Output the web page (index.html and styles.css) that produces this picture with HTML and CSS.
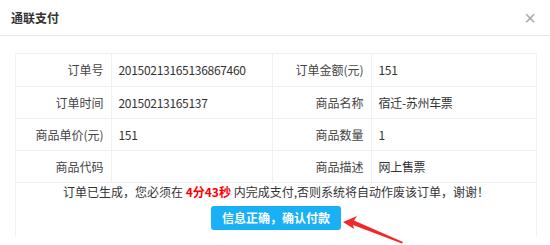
FILE: index.html
```html
<!DOCTYPE html>
<html lang="zh">
<head>
<meta charset="utf-8">
<link rel="stylesheet" href="styles.css">
</head>
<body>
<div class="modal">
  <div class="modal-header">
    <span class="title">通联支付</span>
    <span class="close">×</span>
  </div>
  <div class="modal-body">
    <div class="box">
      <table class="info">
        <tr><td class="lbl c1">订单号</td><td class="val c2">20150213165136867460</td><td class="lbl c3">订单金额(元)</td><td class="val c4">151</td></tr>
        <tr><td class="lbl">订单时间</td><td class="val">20150213165137</td><td class="lbl">商品名称</td><td class="val">宿迁-苏州车票</td></tr>
        <tr><td class="lbl">商品单价(元)</td><td class="val">151</td><td class="lbl">商品数量</td><td class="val">1</td></tr>
        <tr><td class="lbl">商品代码</td><td class="val"></td><td class="lbl">商品描述</td><td class="val">网上售票</td></tr>
      </table>
      <p class="msg">订单已生成，您必须在 <b class="time">4分43秒</b> 内完成支付,否则系统将自动作废该订单，谢谢！</p>
      <div class="actions">
        <button class="btn">信息正确，确认付款</button>
        <svg class="arrow" width="70" height="32" viewBox="0 0 70 32">
          <polygon points="0,9 14,3 11,7.5 60,29 59,30.5 10,12 11,16" fill="#f0282a"/>
        </svg>
      </div>
    </div>
  </div>
</div>
</body>
</html>
```
FILE: styles.css
```css
* { box-sizing: border-box; }
html, body { margin: 0; padding: 0; background: #fff; }
body {
  font-family: "Noto Sans CJK SC", "Noto Sans", "Liberation Sans", sans-serif;
  font-size: 12px;
  color: #333;
  width: 550px;
  height: 245px;
  overflow: hidden;
}
.modal-header {
  height: 36px;
  border-bottom: 1px solid #e8e8e8;
  display: flex;
  align-items: center;
  justify-content: space-between;
  padding: 0 14px 0 11px;
}
.title { font-size: 12px; font-weight: bold; color: #333; }
.close { font-size: 20px; color: #aaa; line-height: 1; font-family: "Liberation Sans", sans-serif; }
.modal-body { padding: 17px 13px 0 15px; }
.box {
  border: 1px solid #f0f0f0;
  border-bottom: none;
  height: 184px;
}
.info { width: 100%; border-collapse: collapse; table-layout: fixed; }
.info td {
  height: 32px;
  border-bottom: 1px solid #f0f0f0;
  border-right: 1px solid #f0f0f0;
  padding: 0 7px;
  white-space: nowrap;
}
.info td:last-child { border-right: none; }
.lbl { text-align: right; color: #444; }
.val { text-align: left; color: #333; letter-spacing: -0.3px; }
.c1 { width: 95px; }
.c2 { width: 161px; }
.c3 { width: 99px; }
.msg {
  margin: 0;
  text-align: center;
  line-height: 17px;
  color: #333;
}
.time { color: #f00; font-weight: bold; }
.actions {
  position: relative;
  display: flex;
  justify-content: center;
  padding-top: 6px;
}
.btn {
  width: 130px;
  height: 24px;
  border: none;
  border-radius: 3px;
  background: #19b0f6;
  color: #fff;
  font-family: inherit;
  font-size: 12px;
  font-weight: bold;
  padding: 0;
}
.arrow { position: absolute; left: 327px; top: 13px; }
```
